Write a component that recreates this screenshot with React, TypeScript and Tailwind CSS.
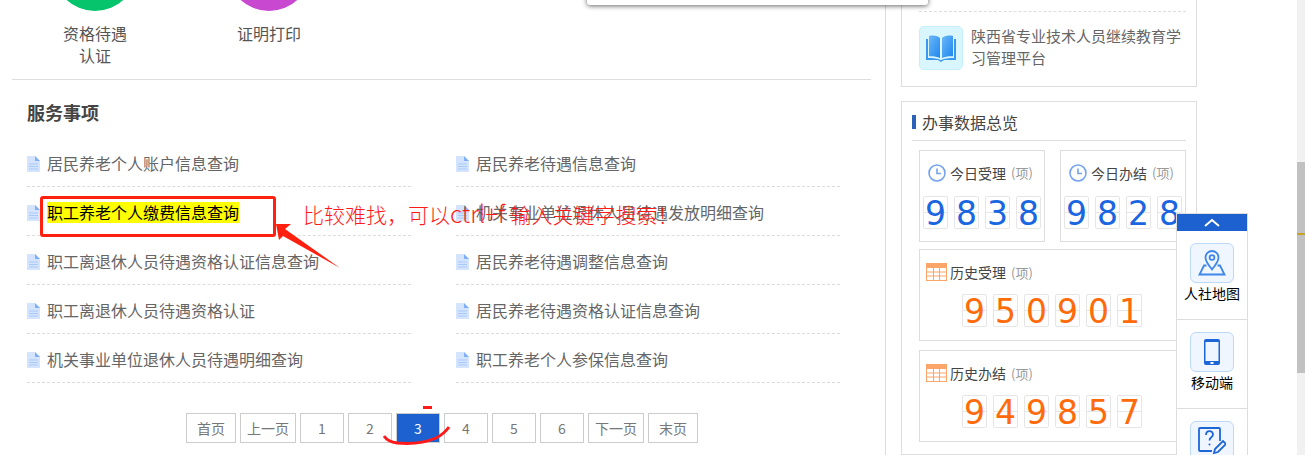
import React from "react";

const leftItems = [
  "居民养老个人账户信息查询",
  "职工养老个人缴费信息查询",
  "职工离退休人员待遇资格认证信息查询",
  "职工离退休人员待遇资格认证",
  "机关事业单位退休人员待遇明细查询",
];
const rightItems = [
  "居民养老待遇信息查询",
  "机关事业单位退休人员待遇发放明细查询",
  "居民养老待遇调整信息查询",
  "居民养老待遇资格认证信息查询",
  "职工养老个人参保信息查询",
];

function DocIcon() {
  return (
    <svg width="13" height="16" viewBox="0 0 13 16" className="mt-px flex-none">
      <path d="M0 0h8l5 5v11H0z" fill="#d3e4fc" />
      <path d="M8 0l5 5H8z" fill="#7fb0f5" />
      <path d="M2 8h9M2 10.5h9M2 13h9" stroke="#a9c9f8" strokeWidth="1" />
    </svg>
  );
}

function ClockIcon() {
  return (
    <svg width="18" height="18" viewBox="0 0 18 18" className="flex-none">
      <circle cx="9" cy="9" r="8" fill="none" stroke="#74a3ee" strokeWidth="1.6" />
      <path d="M9 4.5V9.5H13" fill="none" stroke="#74a3ee" strokeWidth="1.6" />
    </svg>
  );
}

function TableIcon() {
  return (
    <svg width="21" height="18" viewBox="0 0 21 18" className="flex-none">
      <rect width="21" height="18" fill="#fba568" />
      <path d="M1 5h19v12H1z" fill="#fff" />
      <path d="M1 9h19M1 13h19M7.500 5v12M13.500 5v12" stroke="#fba568" strokeWidth="1" />
    </svg>
  );
}

function BookIcon() {
  return (
    <svg width="30" height="28" viewBox="0 0 30 28">
      <defs>
        <linearGradient id="bookGrad" x1="0" y1="0" x2="1" y2="1">
          <stop offset="0" stopColor="#6bb8f8" />
          <stop offset="1" stopColor="#1f86ee" />
        </linearGradient>
      </defs>
      <path d="M0 5h2v19c5 0 10 .4 13 2.200 3-1.800 8-2.200 13-2.200V5h2v21H18l-3 2-3-2H0z" fill="#3b98f0" />
      <path d="M3 2c5-1 9 0 11 2v20c-3-1.600-7-2-11-1.800z" fill="url(#bookGrad)" />
      <path d="M27 2c-5-1-9 0-11 2v20c3-1.600 7-2 11-1.800z" fill="url(#bookGrad)" />
    </svg>
  );
}

function PinIcon() {
  return (
    <svg width="28" height="28" viewBox="0 0 28 28" fill="none" stroke="#3f86ea" strokeWidth="1.800">
      <path d="M14 20.500C10 15.500 7.500 12.500 7.500 8.500a6.500 6.500 0 0 1 13 0c0 4-2.500 7-6.500 12z" />
      <circle cx="14" cy="8.500" r="2.400" />
      <path d="M8.500 16.500H6L1.500 25.500h25L22 16.500h-2.500" />
    </svg>
  );
}

function PhoneIcon() {
  return (
    <svg width="16" height="26" viewBox="0 0 16 26">
      <rect width="16" height="26" rx="2" fill="#1c66d8" />
      <rect x="1.500" y="3" width="13" height="19" fill="#f0f6ff" />
      <rect x="6.500" y="23" width="3" height="2" fill="#fff" />
    </svg>
  );
}

function HelpIcon() {
  return (
    <svg width="28" height="30" viewBox="0 0 28 30" fill="none" stroke="#1c66d8" strokeWidth="1.800">
      <path d="M22 15V3a1 1 0 0 0-1-1H2a1 1 0 0 0-1 1v21a1 1 0 0 0 1 1h12" />
      <path d="M8 9c0-5 7-5 7-.500 0 3-3.500 2.500-3.500 6" />
      <circle cx="11.500" cy="18.500" r="1" fill="#1c66d8" stroke="none" />
      <path d="M16 27l1-4 8-8 3 3-8 8z" />
    </svg>
  );
}

function Digits({ value, color }: { value: string; color: string }) {
  return (
    <div className="flex gap-[6px]">
      {value.split("").map((d, i) => (
        <div
          key={i}
          className="relative h-[33px] w-[25px] rounded-[2px] border border-[#e6e6e6] bg-white text-center font-['DejaVu_Sans',sans-serif] text-[33px] leading-[33px]"
          style={{ color }}
        >
          <span className="absolute inset-x-0 top-[15px] h-px bg-[#e6e6e6]" />
          <span className="relative">{d}</span>
        </div>
      ))}
    </div>
  );
}

function Unit() {
  return <span className="ml-px text-[13px] text-[#999]">(项)</span>;
}

function ListColumn({ items }: { items: string[] }) {
  return (
    <ul>
      {items.map((t) => (
        <li
          key={t}
          className="flex h-[49px] items-center gap-[7px] border-b border-dashed border-[#dcdcdc] pt-[2px] text-[16px] text-[#666]"
        >
          <DocIcon />
          <span className="whitespace-nowrap">{t}</span>
        </li>
      ))}
    </ul>
  );
}

const pages = [
  { t: "首页", w: "w-[50px]" },
  { t: "上一页", w: "w-[56px]" },
  { t: "1", w: "w-[44px]" },
  { t: "2", w: "w-[44px]" },
  { t: "3", w: "w-[44px]", on: true },
  { t: "4", w: "w-[44px]" },
  { t: "5", w: "w-[44px]" },
  { t: "6", w: "w-[44px]" },
  { t: "下一页", w: "w-[56px]" },
  { t: "末页", w: "w-[50px]" },
];

export default function App() {
  return (
    <div className="relative flex h-[455px] w-[1305px] overflow-hidden bg-white font-['Noto_Sans_CJK_SC','Microsoft_YaHei',sans-serif] text-[#333]">
      {/* left column */}
      <div className="h-full w-[886px] flex-none border-r border-[#ddd] pl-[12px]">
        <div className="h-[80px] w-[859px] border-b border-[#ddd]">
          <div className="flex">
            <div className="flex w-[166px] flex-col items-center">
              <div className="mt-[-73px] h-[84px] w-[84px] flex-none rounded-full bg-[#05c46b]" />
              <p className="mt-[11px] w-[66px] text-center text-[16px] leading-[22px] text-[#555]">资格待遇认证</p>
            </div>
            <div className="ml-[8px] flex w-[166px] flex-col items-center">
              <div className="mt-[-73px] h-[84px] w-[84px] flex-none rounded-full bg-[#c848d0]" />
              <p className="mt-[11px] text-center text-[16px] leading-[22px] text-[#555]">证明打印</p>
            </div>
          </div>
        </div>

        <div className="w-[859px] px-[15px]">
          <h3 className="mt-[19px] h-[39px] text-[18px] font-bold leading-[27px] text-[#444]">服务事项</h3>
          <div className="grid w-[813px] grid-cols-[384px_384px] gap-x-[45px]">
            <ListColumn items={leftItems} />
            <ListColumn items={rightItems} />
          </div>
          <div className="ml-[159px] mt-[30px] flex gap-[4px]">
            {pages.map((p) => (
              <div
                key={p.t}
                className={
                  p.on
                    ? `flex h-[30px] items-center justify-center border border-[#ccc] bg-[#1d60d0] text-[14px] text-white ${p.w}`
                    : `flex h-[30px] items-center justify-center border border-[#ccc] bg-white text-[14px] text-[#777] ${p.w}`
                }
              >
                {p.t}
              </div>
            ))}
          </div>
        </div>
      </div>

      {/* right column */}
      <div className="ml-[15px] w-[296px] flex-none">
        <div className="h-[87px] border-x border-b border-[#ddd] pl-[17px] pr-[10px]">
          <div className="h-[12px] border-b border-dashed border-[#ddd]" />
          <div className="mt-[14px] flex gap-[8px]">
            <div className="flex h-[44px] w-[44px] flex-none items-center justify-center rounded-[5px] border border-[#c4f0fa] bg-[#d8f6fc]">
              <BookIcon />
            </div>
            <p className="mt-[-1px] w-[215px] text-[15px] leading-[22px] text-[#666]">陕西省专业技术人员继续教育学习管理平台</p>
          </div>
        </div>

        <div className="mt-[14px] h-[354px] border border-[#ddd] px-[10px]">
          <div className="mx-0 flex h-[39px] w-[274px] items-center gap-[6px] border-b border-[#ddd] pt-px text-[16px] text-[#444]">
            <span className="h-[14px] w-[4px] bg-[#2b62b8]" />
            办事数据总览
          </div>
          <div className="ml-[7px] mt-[9px] flex w-[267px] justify-between">
            {[
              { t: "今日受理", v: "9838" },
              { t: "今日办结", v: "9828" },
            ].map((c) => (
              <div key={c.t} className="h-[92px] w-[126px] border border-[#ddd] pl-[3px]">
                <div className="ml-[5px] mt-[13px] flex h-[18px] items-center gap-[4px] text-[14px] text-[#444]">
                  <ClockIcon />
                  <span>{c.t}</span>
                  <Unit />
                </div>
                <div className="mt-[14px]">
                  <Digits value={c.v} color="#1a66e0" />
                </div>
              </div>
            ))}
          </div>
          {[
            { t: "历史受理", v: "950901" },
            { t: "历史办结", v: "949857" },
          ].map((c, i) => (
            <div
              key={c.t}
              className={
                i === 0
                  ? "ml-[7px] mt-[7px] h-[92px] w-[267px] border border-[#ddd]"
                  : "ml-[7px] mt-[9px] h-[92px] w-[267px] border border-[#ddd]"
              }
            >
              <div className="ml-[6px] mt-[13px] flex h-[18px] items-center gap-[3px] text-[14px] text-[#444]">
                <TableIcon />
                <span>{c.t}</span>
                <span className="ml-[1px]"><Unit /></span>
              </div>
              <div className="ml-[42px] mt-[13px]">
                <Digits value={c.v} color="#ff6a0a" />
              </div>
            </div>
          ))}
        </div>
      </div>

      {/* scrollbar */}
      <div className="ml-auto flex h-full w-[8px] flex-none flex-col bg-[#f1f1f1]">
        <div className="h-[162px] flex-none" />
        <div className="h-[211px] flex-none bg-[#c1c1c1]" />
      </div>

      {/* window popup at top */}
      <div className="absolute left-[587px] top-[-10px] h-[15px] w-[341px] rounded-b-[3px] bg-white shadow-[0_1px_5px_rgba(0,0,0,0.6)]" />

      {/* floating side bar */}
      <div className="absolute left-[1176px] top-[213px] h-[250px] w-[72px] border-x border-t border-[#ddd] bg-white">
        <div className="flex h-[17px] items-center justify-center bg-[#1d60d0]">
          <svg width="16" height="9" viewBox="0 0 16 9" fill="none" stroke="#fff" strokeWidth="2">
            <path d="M1 8l7-6 7 6" />
          </svg>
        </div>
        <div className="flex h-[89px] flex-col items-center border-b border-[#ddd] pt-[12px]">
          <div className="flex h-[40px] w-[44px] items-center justify-center rounded-[6px] border border-[#bcd8fb] bg-[#f0f6ff]">
            <PinIcon />
          </div>
          <span className="text-[14px] leading-[20px] text-black">人社地图</span>
        </div>
        <div className="flex h-[89px] flex-col items-center border-b border-[#ddd] pt-[12px]">
          <div className="flex h-[40px] w-[44px] items-center justify-center rounded-[6px] border border-[#bcd8fb] bg-[#f0f6ff]">
            <PhoneIcon />
          </div>
          <span className="text-[14px] leading-[20px] text-black">移动端</span>
        </div>
        <div className="flex flex-col items-center pt-[12px]">
          <div className="flex h-[40px] w-[44px] items-center justify-center rounded-[6px] border border-[#bcd8fb] bg-[#f0f6ff]">
            <HelpIcon />
          </div>
        </div>
      </div>

      {/* screenshot annotations drawn over the page */}
      <div className="absolute left-[47px] top-[202px] h-[21px] w-[192px] bg-[#ffff00] text-[16px] leading-[21px] text-black">
        职工养老个人缴费信息查询
      </div>
      <div className="absolute left-[40px] top-[196px] h-[41px] w-[236px] rounded-[3px] border-[3px] border-[#ff200f]" />
      <div className="absolute left-[303px] top-[198px] whitespace-nowrap text-[21px] font-light leading-[30px] text-[#ff1a1a]">
        比较难找，可以<span className="text-[24px]">ctrl+f </span>输入关键字搜索！
      </div>
      <svg className="absolute left-0 top-0" width="1305" height="455" fill="none">
        <polygon points="276,224 291,224 285,229 340,268 283,236 279,240" fill="#ff200f" />
        <path d="M384 436 Q388 442 397 443 Q420 445 436 438 Q444 434 449 427" stroke="#ff1a1a" strokeWidth="3" />
        <rect x="423" y="406" width="9" height="3" fill="#ff1a1a" />
        <rect x="1297" y="233" width="8" height="2" fill="#c9a227" />
      </svg>
    </div>
  );
}
